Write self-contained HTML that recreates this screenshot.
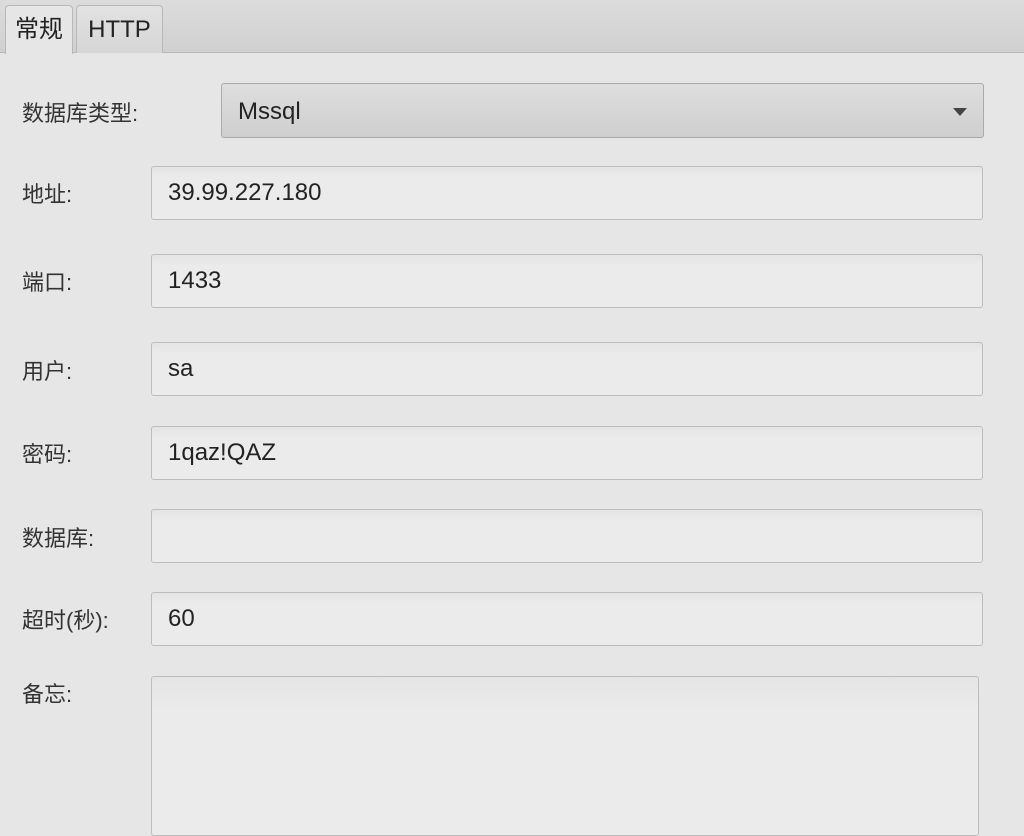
<!DOCTYPE html><html><head><meta charset="utf-8"><style>
body{margin:0;width:1024px;height:815px;overflow:hidden;background:#e6e6e6;font-family:"Liberation Sans","Noto Sans CJK SC",sans-serif;color:#333;position:relative}
.bar{position:absolute;left:0;top:0;width:1024px;height:52px;background:linear-gradient(#dcdcdc,#d0d0d0);border-bottom:1px solid #b8b8b8}
.tab{position:absolute;top:5px;height:47px;border:1px solid #b8b8b8;border-bottom:none;border-radius:4px 4px 0 0;font-size:24px;line-height:48px;text-align:center;color:#222}
.l{position:absolute;left:22px;font-size:22px;color:#333}
.f{position:absolute;left:151px;width:832px;height:54px;border:1px solid #bdbdbd;border-radius:3px;background:linear-gradient(#e4e4e4,#ebebeb 20%,#ebebeb);box-sizing:border-box;font-size:24px;line-height:52px;padding-left:16px;color:#222}
</style></head><body>
<div class="bar"></div>
<div class="tab" style="left:5px;width:66px;background:#e6e6e6;height:48px;z-index:2">常规</div>
<div class="tab" style="left:76px;width:85px;background:linear-gradient(#e2e2e2,#d6d6d6)">HTTP</div>
<div class="l" style="top:96px">数据库类型:</div>
<div class="f" style="left:221px;width:763px;top:83px;height:55px;line-height:55px;background:linear-gradient(#dedede,#cfcfcf);border-color:#aaa;padding-left:16px">Mssql
<svg style="position:absolute;right:16px;top:24px" width="14" height="8"><path d="M0 0H14L7 8Z" fill="#444"/></svg></div>
<div class="l" style="top:177px">地址:</div><div class="f" style="top:166px">39.99.227.180</div>
<div class="l" style="top:265px">端口:</div><div class="f" style="top:254px">1433</div>
<div class="l" style="top:354px">用户:</div><div class="f" style="top:342px">sa</div>
<div class="l" style="top:437px">密码:</div><div class="f" style="top:426px">1qaz!QAZ</div>
<div class="l" style="top:521px">数据库:</div><div class="f" style="top:509px"></div>
<div class="l" style="top:603px">超时(秒):</div><div class="f" style="top:592px">60</div>
<div class="l" style="top:677px">备忘:</div><div class="f" style="top:676px;width:828px;height:160px"></div>
</body></html>
